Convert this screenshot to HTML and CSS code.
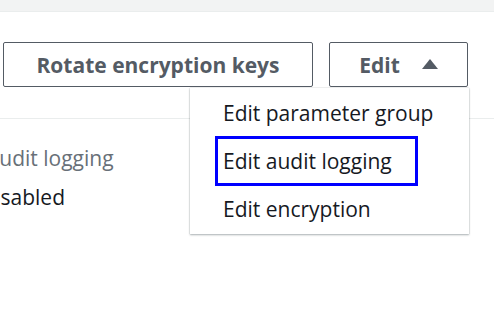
FILE: index.html
```html
<!DOCTYPE html>
<html lang="en">
<head>
    <meta charset="UTF-8">
    <title>Cluster actions</title>
    <link rel="stylesheet" href="styles.css">
</head>
<body>
    <div class="top-band"></div>

    <div class="header">
        <div class="actions">
            <button class="btn btn-rotate">Rotate encryption keys</button>
            <div class="dropdown">
                <button class="btn btn-edit">
                    Edit
                    <svg class="caret" width="16" height="10" viewBox="0 0 16 10">
                        <path d="M8 0 L16 10 L0 10 Z" fill="#545b64"/>
                    </svg>
                </button>
                <ul class="menu">
                    <li class="menu-item">Edit parameter group</li>
                    <li class="menu-item focused">Edit audit logging</li>
                    <li class="menu-item">Edit encryption</li>
                </ul>
            </div>
        </div>
    </div>

    <div class="details">
        <div class="label">Audit logging</div>
        <div class="value">Disabled</div>
    </div>
</body>
</html>
```

FILE: styles.css
```css
* {
    margin: 0;
    padding: 0;
    box-sizing: border-box;
    font-family: 'Open Sans', 'Noto Sans', sans-serif;
}

body {
    background-color: #fff;
    width: 494px;
    height: 315px;
    overflow: hidden;
}

.top-band {
    height: 12px;
    background-color: #f2f3f3;
    border-bottom: 1px solid #eaeded;
}

.header {
    height: 107px;
    border-bottom: 1px solid #eaeded;
    padding: 30px 0 0 3px;
}

.actions {
    display: flex;
    gap: 16px;
}

.btn {
    flex-shrink: 0;
    height: 45px;
    border: 1px solid #545b64;
    border-radius: 2px;
    background-color: #fff;
    color: #545b64;
    font-size: 21px;
    font-weight: 700;
    display: flex;
    align-items: center;
    justify-content: center;
}

.btn-rotate {
    width: 310px;
}

.btn-edit {
    width: 139px;
    gap: 22px;
}

.caret {
    margin-top: -2px;
}

.dropdown {
    position: relative;
    flex-shrink: 0;
}

.menu {
    position: absolute;
    top: 46px;
    right: -1px;
    width: 279px;
    list-style: none;
    background-color: #fff;
    padding: 1px 0 1px;
    box-shadow: 0 1px 2px rgba(0, 22, 30, 0.3), 0 0 1px rgba(0, 28, 36, 0.3);
    z-index: 10;
}

.menu-item {
    height: 48px;
    padding-left: 33px;
    font-size: 21px;
    color: #16191f;
    display: flex;
    align-items: center;
}

.menu-item.focused {
    margin: -1px 51px -1px 25px;
    height: 50px;
    padding-left: 5px;
    border: 3px solid #0000ff;
}

.details {
    margin-left: -14px;
    padding-top: 25px;
}

.label {
    font-size: 21px;
    color: #687078;
}

.value {
    font-size: 21px;
    color: #16191f;
    margin-top: 11px;
    margin-left: -6px;
}
```
